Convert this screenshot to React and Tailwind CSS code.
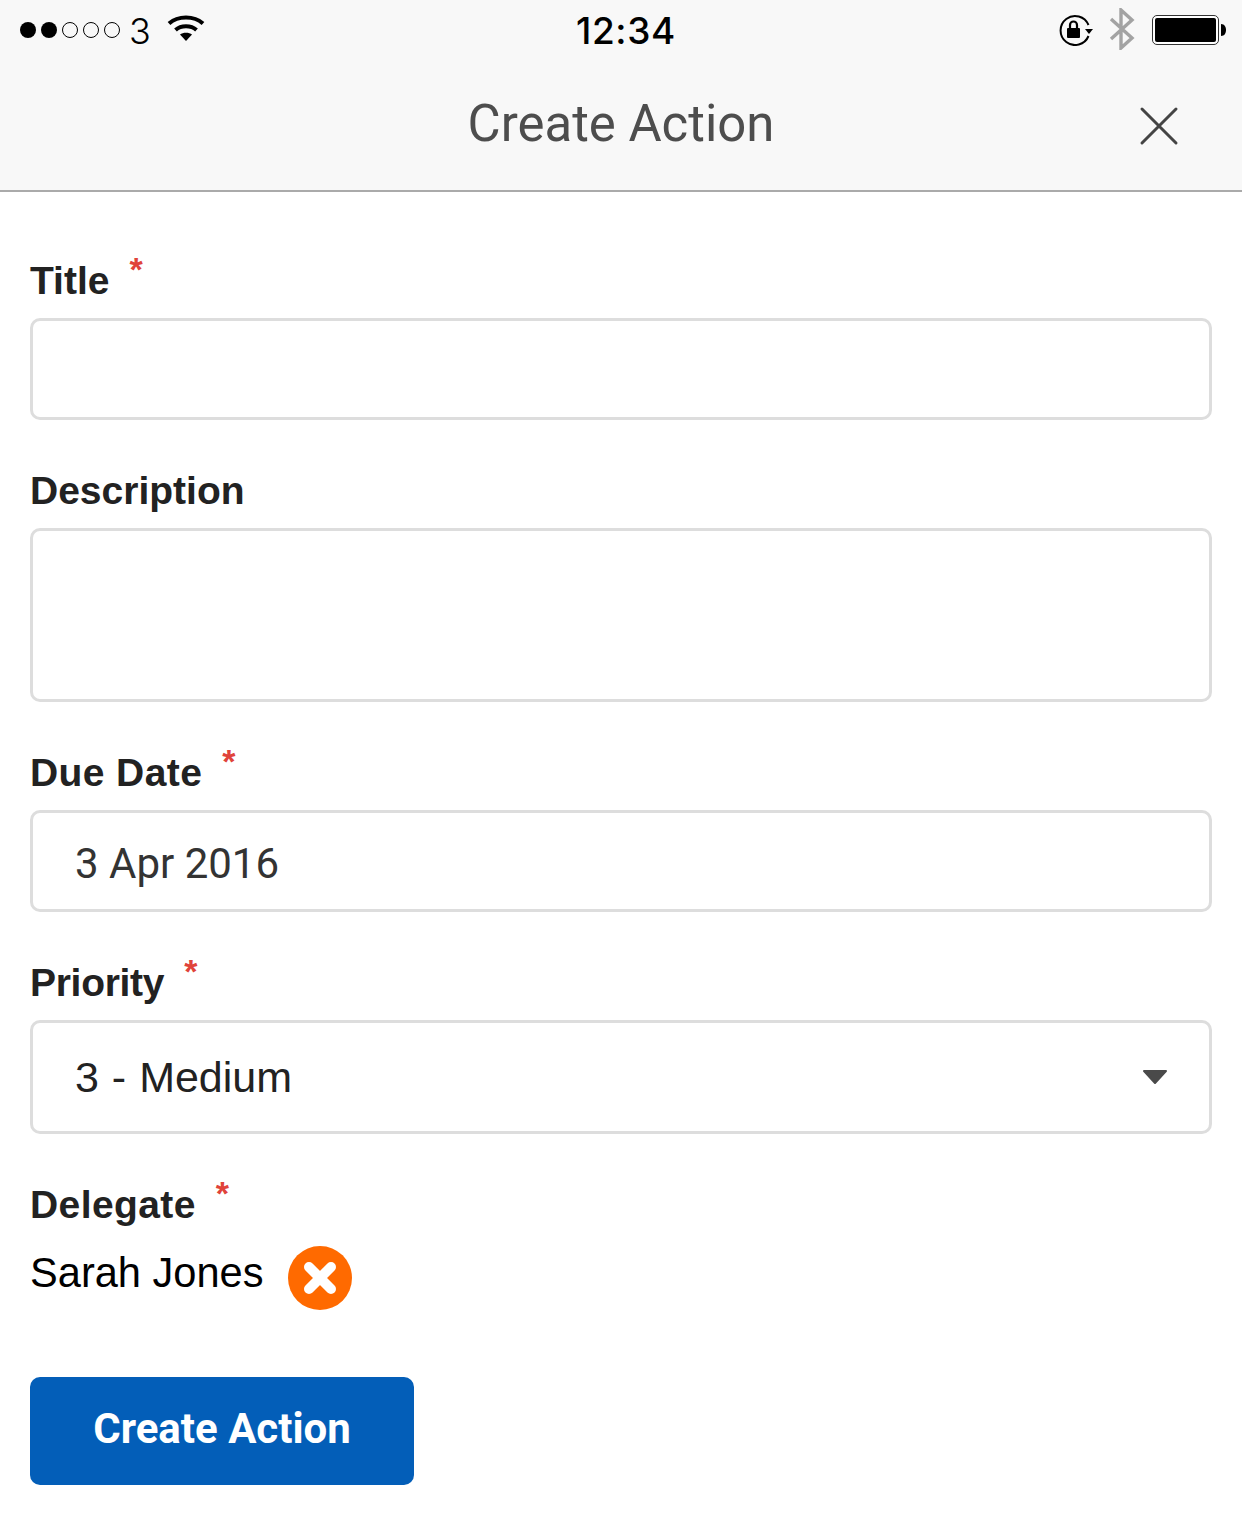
import React from "react";

const roboto = "font-['Roboto',sans-serif]";
const liberation = "font-['Liberation_Sans',sans-serif]";

function Dots() {
  return (
    <div className="flex items-center gap-[5px]">
      <span className="w-4 h-4 rounded-full bg-black" />
      <span className="w-4 h-4 rounded-full bg-black" />
      <span className="w-4 h-4 rounded-full border border-black" />
      <span className="w-4 h-4 rounded-full border border-black" />
      <span className="w-4 h-4 rounded-full border border-black" />
    </div>
  );
}

function Wifi() {
  return (
    <svg width="38" height="28" viewBox="0 0 38 28" fill="none">
      <path d="M2 9.5 C11 1.5 27 1.5 36 9.5" stroke="#000" strokeWidth="4" />
      <path d="M8.5 16 C14 11 24 11 29.5 16" stroke="#000" strokeWidth="4" />
      <path d="M13 20.5 C16 18 22 18 25 20.5 L19 27 Z" fill="#000" />
    </svg>
  );
}

function RotationLock() {
  return (
    <svg width="36" height="32" viewBox="0 0 36 32" fill="none">
      <path d="M30.5 22 A14.5 14.5 0 1 1 30.5 11" stroke="#000" strokeWidth="2" />
      <path d="M27 15 H35 L31 20 Z" fill="#000" />
      <rect x="9" y="14" width="13" height="10" rx="1" fill="#000" />
      <path d="M12 14 V11 A3.5 3.5 0 0 1 19 11 V14" stroke="#000" strokeWidth="2.2" />
    </svg>
  );
}

function Bluetooth() {
  return (
    <svg width="26" height="42" viewBox="0 0 26 42" fill="none">
      <path d="M2 11 L23 30 L12 40 V2 L23 12 L2 31" stroke="#a3a3a3" strokeWidth="3.4" />
    </svg>
  );
}

function Battery() {
  return (
    <div className="flex items-center">
      <div className="w-[67px] h-[30px] rounded-[5px] border border-[#333] bg-white p-[2px]">
        <div className="w-full h-full bg-black rounded-[2px]" />
      </div>
      <svg width="6" height="12" viewBox="0 0 6 12" className="ml-[2px]">
        <path d="M0 0 C3.5 0 5 3 5 6 C5 9 3.5 12 0 12 Z" fill="#000" />
      </svg>
    </div>
  );
}

function Label({ children, star, tracking = "" }) {
  return (
    <div className="flex h-12 items-center">
      <span className={`${liberation} text-[39px] font-bold text-[#222] leading-[48px] mt-[2px] ${tracking}`}>{children}</span>
      {star && (
        <span className={`${liberation} font-bold text-[34px] leading-none text-[#e0433a] self-start mt-[-4px] ml-5`}>*</span>
      )}
    </div>
  );
}

export default function App() {
  return (
    <div className="w-[1242px] h-[1520px] bg-white overflow-hidden">
      <header className="h-[192px] bg-[#f8f8f8] border-b-2 border-[#aaaaaa] flex flex-col">
        <div className="h-[60px] pl-5 pr-[15px] flex items-center justify-between relative">
          <div className="flex items-center">
            <Dots />
            <span className="font-['Inter',sans-serif] text-[36px] font-light text-black ml-[9px] mt-[2px] leading-none">3</span>
            <span className="ml-4 mb-[4px]"><Wifi /></span>
          </div>
          <span className="absolute left-[576px] top-[10px] font-['Inter',sans-serif] text-[37px] leading-[42px] font-medium text-black tracking-[0.6px]">12:34</span>
          <div className="flex items-center">
            <RotationLock />
            <span className="ml-[15px] mb-[2px]"><Bluetooth /></span>
            <span className="ml-[17px]"><Battery /></span>
          </div>
        </div>
        <div className="flex-1 relative flex items-center justify-center pb-[2px]">
          <span className={`${roboto} text-[50.9px] leading-[56px] text-[#4d4d4d]`}>Create Action</span>
          <svg width="40" height="40" viewBox="0 0 40 40" className="absolute left-[1139px] top-[46px]" fill="none">
            <path d="M3 3 L37 37 M37 3 L3 37" stroke="#444" strokeWidth="3" strokeLinecap="round" />
          </svg>
        </div>
      </header>

      <main className="px-[30px] pt-[64px]">
        <Label star>Title</Label>
        <div className="mt-[14px] h-[102px] rounded-[10px] border-[3px] border-[#dddddd]" />

        <div className="mt-[46px]"><Label>Description</Label></div>
        <div className="mt-[14px] h-[174px] rounded-[10px] border-[3px] border-[#dddddd]" />

        <div className="mt-[46px]"><Label star tracking="tracking-[0.4px]">Due Date</Label></div>
        <div className={`mt-[14px] h-[102px] rounded-[10px] border-[3px] border-[#dddddd] pl-[42px] pt-[5px] flex items-center ${roboto} text-[42px] text-[#333]`}>
          3 Apr 2016
        </div>

        <div className="mt-[46px]"><Label star tracking="tracking-[-0.3px]">Priority</Label></div>
        <div className={`mt-[14px] h-[114px] rounded-[10px] border-[3px] border-[#dddddd] pl-[42px] pr-[41px] flex items-center justify-between ${liberation} text-[43px] text-[#222]`}>
          <span className="[word-spacing:1px]">3 - Medium</span>
          <svg width="26" height="15" viewBox="0 0 26 15">
            <path d="M2 1 H24 L13 13 Z" fill="#4a4a4a" stroke="#4a4a4a" strokeWidth="2" strokeLinejoin="round" />
          </svg>
        </div>

        <div className="mt-[46px]"><Label star tracking="tracking-[0.4px]">Delegate</Label></div>
        <div className="mt-[18px] flex items-center h-[64px]">
          <span className={`${liberation} text-[41.6px] text-black leading-none mb-[10px]`}>Sarah Jones</span>
          <span className="ml-[24px] w-16 h-16 rounded-full bg-[#ff6a00] flex items-center justify-center">
            <svg width="36" height="36" viewBox="0 0 36 36">
              <path d="M7 7 L29 29 M29 7 L7 29" stroke="#fff" strokeWidth="10" strokeLinecap="round" />
            </svg>
          </span>
        </div>

        <button className={`mt-[67px] w-[384px] h-[108px] pb-[6px] rounded-[10px] bg-[#035eb8] text-white ${roboto} font-bold text-[42px] block`}>
          Create Action
        </button>
      </main>
    </div>
  );
}
